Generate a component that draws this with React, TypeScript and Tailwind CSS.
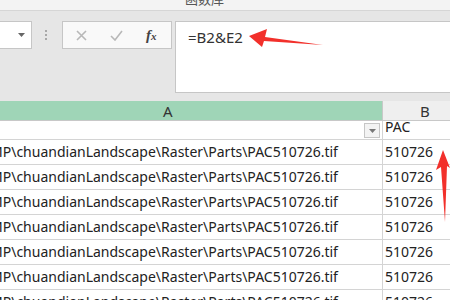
import React from "react";

const path = "MP\\chuandianLandscape\\Raster\\Parts\\PAC510726.tif";

function Row({ a, b, h }: { a: React.ReactNode; b: string; h: string }) {
  return (
    <div className={`flex ${h} border-b border-[#d4d4d4]`}>
      <div className="w-[383px] shrink-0 border-r border-[#d4d4d4] flex items-end pb-[2px] overflow-hidden relative">
        {a}
      </div>
      <div className="flex-1 flex items-end pb-[2px] pl-[2px] text-[14px] leading-[20px] text-[#222]">{b}</div>
    </div>
  );
}

export default function App() {
  const font = { fontFamily: '"Noto Sans", "Noto Sans CJK SC", sans-serif' };
  return (
    <div className="relative w-[450px] h-[300px] overflow-hidden bg-white" style={font}>
      {/* top ribbon strip */}
      <div className="h-[11px] bg-[#f3f3f3] border-b border-[#d6d6d6] flex overflow-hidden">
        <span className="ml-[185px] mt-[-8px] text-[13px] leading-[14px] text-[#555]" style={{ fontFamily: '"Noto Sans CJK SC", sans-serif' }}>函数库</span>
      </div>
      {/* formula bar area */}
      <div className="h-[90px] bg-[#e6e6e6] flex items-start pt-[10px]">
        <div className="w-[32px] h-[28px] bg-white border border-[#c6c6c6] border-l-0 flex items-center justify-end pr-[6px]">
          <svg width="7" height="4" viewBox="0 0 7 4"><path d="M0 0h7L3.5 4z" fill="#666" /></svg>
        </div>
        <div className="ml-[13px] h-[28px] flex flex-col justify-center gap-[2px]">
          <div className="w-[2px] h-[2px] bg-[#a8a8a8]" />
          <div className="w-[2px] h-[2px] bg-[#a8a8a8]" />
          <div className="w-[2px] h-[2px] bg-[#a8a8a8]" />
        </div>
        <div className="ml-[15px] w-[110px] h-[28px] bg-[#f9f9f9] border border-[#c6c6c6] flex items-center">
          <svg className="ml-[13px]" width="11" height="11" viewBox="0 0 11 11"><path d="M1 1L10 10M10 1L1 10" stroke="#b8b8b8" strokeWidth="1.6" /></svg>
          <svg className="ml-[23px]" width="13" height="11" viewBox="0 0 13 11"><path d="M1 6L5 10L12 1" stroke="#b8b8b8" strokeWidth="1.6" fill="none" /></svg>
          <span className="ml-[23px] text-[15px] italic font-bold text-[#444]" style={{ fontFamily: '"Liberation Serif", serif' }}>f<span className="text-[11px]">x</span></span>
        </div>
        <div className="ml-[3px] flex-1 h-[72px] bg-white border border-[#c6c6c6] border-r-0 pl-[12px] pt-[4px] text-[15px] text-[#333]">
          =B2&amp;E2
        </div>
      </div>
      {/* column headers */}
      <div className="flex h-[20px] border-b border-[#c8c8c8] text-[15px] leading-[20px] text-[#333]">
        <div className="w-[383px] shrink-0 bg-[#9fd5b7] border-r border-[#c8c8c8] pl-[163px]">A</div>
        <div className="flex-1 bg-[#efefef] pl-[37px]">B</div>
      </div>
      {/* rows */}
      <Row
        h="h-[19px]"
        b="PAC"
        a={
          <div className="absolute right-[2px] top-[2px] w-[16px] h-[15px] bg-[#f3f3f3] border border-[#c6c6c6] flex items-center justify-center">
            <svg width="7" height="4" viewBox="0 0 7 4"><path d="M0 0h7L3.5 4z" fill="#777" /></svg>
          </div>
        }
      />
      {Array.from({ length: 7 }).map((_, i) => (
        <Row
          key={i}
          h="h-[25px]"
          b="510726"
          a={<span className="ml-[-10px] whitespace-nowrap text-[14px] leading-[20px] text-[#222]">{path}</span>}
        />
      ))}
      {/* red arrows overlay */}
      <svg className="absolute left-0 top-0 pointer-events-none" width="450" height="300" viewBox="0 0 450 300">
        <polygon points="249,36 267,29 265,37 323,45 264,41 262,47" fill="#f2302b" />
        <polygon points="443,150 450,168 447,166 445,222 441,167 436,170" fill="#f2302b" />
      </svg>
    </div>
  );
}
